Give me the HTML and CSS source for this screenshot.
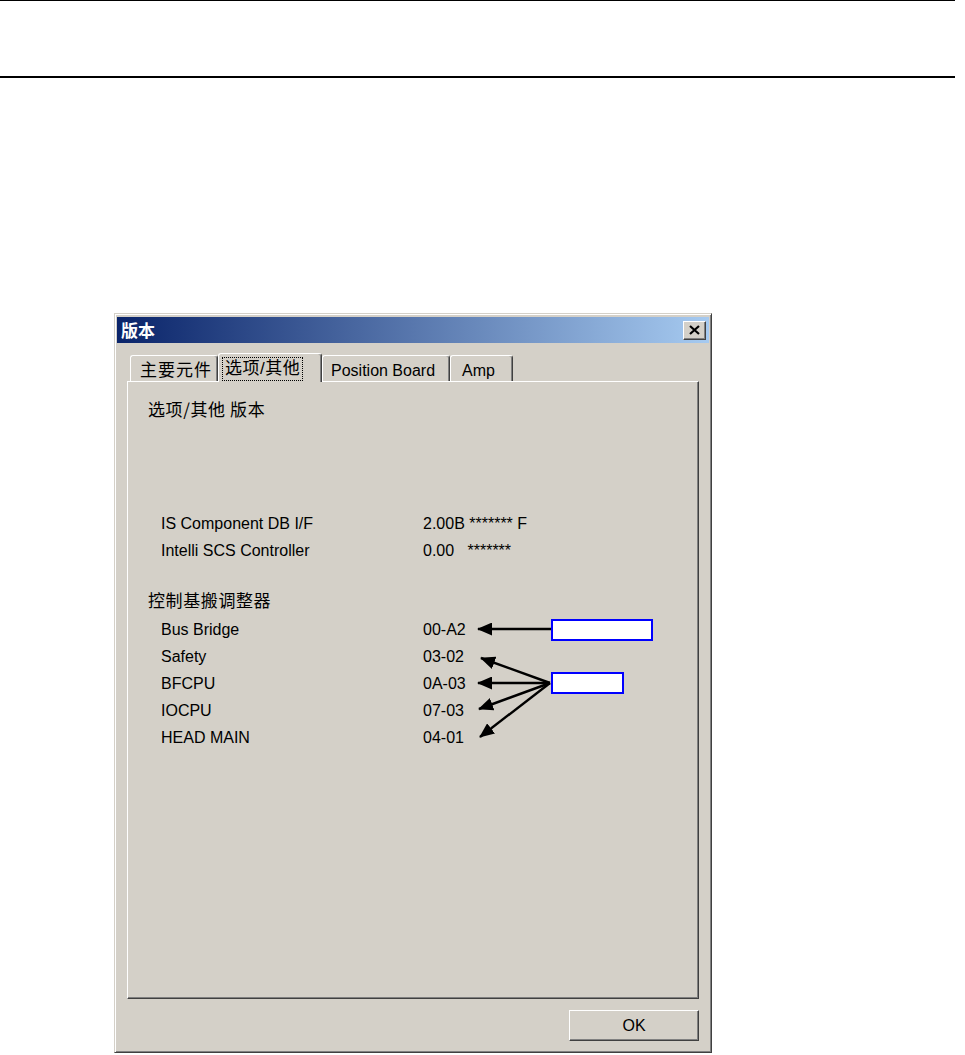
FILE: index.html
```html
<!DOCTYPE html>
<html lang="zh-CN">
<head>
    <meta charset="UTF-8">
    <title>版本</title>
    <link rel="stylesheet" href="styles.css">
</head>
<body>
    <div class="page-header"></div>

    <div class="dialog">
        <div class="titlebar">
            <span class="title">版本</span>
            <span class="close-btn">
                <svg width="11" height="10" viewBox="0 0 11 10">
                    <path d="M1 1 L10 9 M10 1 L1 9" stroke="#000" stroke-width="2.2" fill="none"/>
                </svg>
            </span>
        </div>

        <div class="tabs">
            <div class="tab tab-main">主要元件</div>
            <div class="tab tab-options active"><span class="focus">选项/其他</span></div>
            <div class="tab tab-position">Position Board</div>
            <div class="tab tab-amp">Amp</div>
        </div>

        <div class="panel">
            <div class="heading">选项/其他 版本</div>
            <div class="rows options-rows">
                <div class="row"><span class="name">IS Component DB I/F</span><span class="value">2.00B ******* F</span></div>
                <div class="row"><span class="name">Intelli SCS Controller</span><span class="value">0.00&nbsp;&nbsp; *******</span></div>
            </div>

            <div class="heading second">控制基搬调整器</div>
            <div class="rows board-rows">
                <div class="row"><span class="name">Bus Bridge</span><span class="value">00-A2</span></div>
                <div class="row"><span class="name">Safety</span><span class="value">03-02</span></div>
                <div class="row"><span class="name">BFCPU</span><span class="value">0A-03</span></div>
                <div class="row"><span class="name">IOCPU</span><span class="value">07-03</span></div>
                <div class="row"><span class="name">HEAD MAIN</span><span class="value">04-01</span></div>
            </div>

            <!-- callouts drawn over the panel -->
            <svg class="notes" width="570" height="618" viewBox="0 0 570 618">
                <defs>
                    <marker id="head" markerWidth="15" markerHeight="13" refX="14" refY="6.5" orient="auto" markerUnits="userSpaceOnUse">
                        <path d="M0 0 L15 6.5 L0 13 Z" fill="#000"/>
                    </marker>
                </defs>
                <g stroke="#000" stroke-width="2.4" fill="none">
                    <line x1="424" y1="248" x2="351" y2="248" marker-end="url(#head)"/>
                    <line x1="423" y1="302" x2="354" y2="277" marker-end="url(#head)"/>
                    <line x1="423" y1="302" x2="351" y2="302" marker-end="url(#head)"/>
                    <line x1="423" y1="302" x2="352" y2="328" marker-end="url(#head)"/>
                    <line x1="423" y1="302" x2="353" y2="356" marker-end="url(#head)"/>
                </g>
                <rect x="425" y="239" width="100" height="20" fill="#fff" stroke="#0000ff" stroke-width="2"/>
                <rect x="425" y="292" width="71" height="20" fill="#fff" stroke="#0000ff" stroke-width="2"/>
            </svg>
        </div>

        <div class="footer">
            <button class="ok-btn">OK</button>
        </div>
    </div>
</body>
</html>
```

FILE: styles.css
```css
body {
    margin: 0;
    padding: 0;
    background-color: #fff;
    font-family: "Liberation Sans", "Noto Sans CJK SC", sans-serif;
    font-size: 16px;
    color: #000;
}

.page-header {
    width: 955px;
    height: 75px;
    border-top: 1px solid #000;
    border-bottom: 2px solid #000;
}

/* window frame, win2000 look */
.dialog {
    box-sizing: border-box;
    width: 598px;
    margin: 235px 0 0 114px;
    padding: 3px 2px 11px 2px;
    background-color: #d4d0c8;
    border: 1px solid;
    border-color: #d4d0c8 #404040 #404040 #d4d0c8;
    box-shadow: inset 1px 1px #fff, inset -1px -1px #808080;
}

.titlebar {
    height: 26px;
    display: flex;
    align-items: center;
    justify-content: space-between;
    padding: 0 3px 0 4px;
    background: linear-gradient(to right, #0a246a, #a6caf0);
}

.title {
    color: #fff;
    font-weight: bold;
    font-size: 17px;
    font-family: "Noto Sans CJK SC", sans-serif;
    line-height: 26px;
}

.close-btn {
    box-sizing: border-box;
    width: 23px;
    height: 19px;
    display: flex;
    align-items: center;
    justify-content: center;
    background-color: #d4d0c8;
    border: 1px solid;
    border-color: #fff #404040 #404040 #fff;
    box-shadow: inset -1px -1px #808080;
}

.tabs {
    display: flex;
    align-items: flex-end;
    height: 38px;
    margin: 0 10px;
    padding-left: 3px;
    position: relative;
    z-index: 1;
}

.tab {
    box-sizing: border-box;
    height: 26px;
    padding: 2px 0 0 9px;
    line-height: 26px;
    white-space: nowrap;
    border: 1px solid;
    border-bottom: none;
    border-color: #fff #404040 #fff #fff;
    border-radius: 3px 3px 0 0;
    box-shadow: inset -1px 0 #808080;
}

.tab-main { width: 88px; font-size: 17px; letter-spacing: 1px; }
.tab-options { width: 104px; font-size: 17px; }
.tab-position { width: 128px; padding-left: 8px; }
.tab-amp { width: 63px; padding-left: 11px; }

.tab.active {
    height: 29px;
    margin-bottom: -1px;
    padding-left: 4px;
    padding-top: 3px;
    line-height: 24px;
    background-color: #d4d0c8;
}

.focus {
    display: inline-block;
    padding: 0 2px;
    line-height: 22px;
    letter-spacing: 0.5px;
    outline: 1px dotted #000;
}

.panel {
    box-sizing: border-box;
    position: relative;
    height: 618px;
    margin: 0 10px;
    padding: 13px 0 0 0;
    border: 1px solid;
    border-color: #fff #404040 #404040 #fff;
    box-shadow: inset -1px -1px #808080;
}

.heading {
    padding-left: 20px;
    font-size: 17px;
    line-height: 27px;
    font-family: "Noto Sans CJK SC", sans-serif;
    letter-spacing: 0.6px;
}

.heading.second {
    margin-top: 22px;
}

.options-rows {
    margin-top: 88px;
}

.board-rows {
    margin-top: 3px;
}

.row {
    display: flex;
    line-height: 27px;
    padding-left: 33px;
}

.name {
    width: 262px;
}

.value {
    white-space: pre;
}

.notes {
    position: absolute;
    left: -1px;
    top: -1px;
}

.footer {
    display: flex;
    justify-content: flex-end;
    margin: 11px 10px 0 0;
}

.ok-btn {
    box-sizing: border-box;
    width: 130px;
    height: 31px;
    background-color: #d4d0c8;
    font-family: "Liberation Sans", sans-serif;
    font-size: 16px;
    color: #000;
    border: 1px solid;
    border-color: #fff #404040 #404040 #fff;
    box-shadow: inset -1px -1px #808080;
    padding: 0;
}
```
